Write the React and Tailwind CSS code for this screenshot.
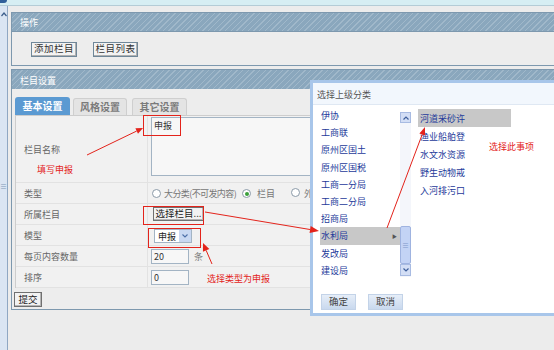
import React from 'react';

const leftItems = ['伊协', '工商联', '原州区国土', '原州区国税', '工商一分局', '工商二分局', '招商局', '水利局', '发改局', '建设局'];
const rightItems = ['河道采砂许', '渔业船舶登', '水文水资源', '野生动物戒', '入河排污口'];

const stripe = 'bg-[repeating-linear-gradient(135deg,#8aa7bd_0px,#8aa7bd_3px,#a0b8ca_3px,#a0b8ca_4px)]';

// red arrow with a filled head, points computed from the two ends
function Arrow({ x1, y1, x2, y2, len = 8, half = 3 }) {
  const dx = x2 - x1;
  const dy = y2 - y1;
  const d = Math.hypot(dx, dy);
  const ux = dx / d;
  const uy = dy / d;
  const bx = x2 - ux * len;
  const by = y2 - uy * len;
  const pts = `${x2},${y2} ${bx - uy * half},${by + ux * half} ${bx + uy * half},${by - ux * half}`;
  return (
    <g>
      <line x1={x1} y1={y1} x2={bx} y2={by} stroke="#e3231b" strokeWidth="1" />
      <polygon points={pts} fill="#e3231b" />
    </g>
  );
}

function Radio({ checked }) {
  return (
    <span className="inline-flex shrink-0 items-center justify-center w-[9px] h-[9px] rounded-full border border-[#8b9aa8] bg-white">
      {checked && <span className="w-[4px] h-[4px] rounded-full bg-[#3aa03a]" />}
    </span>
  );
}

function Row({ label, h = 'h-[21px]', children }) {
  return (
    <div className={`flex ${h} border-b border-[#e2e2e2]`}>
      <div className="w-[132px] flex items-center pl-[8px] text-[#666] border-r border-[#e2e2e2]">{label}</div>
      <div className="flex-1 flex items-center pl-[3px]">{children}</div>
    </div>
  );
}

export default function App() {
  return (
    <div className="relative w-[554px] h-[350px] overflow-hidden bg-[#ececec] font-['Noto_Sans_CJK_SC',sans-serif] text-[9px] leading-none text-[#333]">
      {/* top band */}
      <div className="flex h-[6px] bg-[#d6eef3] border-b border-[#b4ccd6]">
        <div className="w-[7px] h-[3px] bg-[#2f5f9a] rounded-br-[3px]" />
      </div>

      <div className="flex h-[344px]">
        {/* page scroll strip */}
        <div className="w-[8px] bg-[#dae5f3] border-r border-[#8fa7c3] flex flex-col items-center">
          <svg width="6" height="5" viewBox="0 0 6 5" className="mt-[6px]">
            <path d="M0.5 4 L3 1 L5.5 4" fill="none" stroke="#3b5d8a" strokeWidth="1.2" />
          </svg>
          <div className="mt-[166px] text-[7px] text-[#7f97b8]">≡</div>
        </div>

        <div className="flex-1 pl-[3px] pt-[6px] flex flex-col">
          {/* 操作 panel */}
          <div className="w-[600px] border border-[#7d98ae] bg-[#ededed]">
            <div className={`h-[19px] ${stripe} flex items-center pl-[8px] pt-[1px] text-white border-b border-[#7d98ae]`}>操作</div>
            <div className="h-[33px] flex items-center gap-[16px] pl-[19px] pt-[1px]">
              <button className="h-[15px] w-[46px] border border-[#6f8799] bg-[#f3f3f3] text-[9.5px] tracking-[0.5px] text-[#333] shadow-[inset_-1px_-1px_0_#b0b0b0]">添加栏目</button>
              <button className="h-[15px] w-[45px] border border-[#6f8799] bg-[#f3f3f3] text-[9.5px] tracking-[0.5px] text-[#333] shadow-[inset_-1px_-1px_0_#b0b0b0]">栏目列表</button>
            </div>
          </div>

          {/* 栏目设置 panel */}
          <div className="mt-[3px] w-[600px] border border-[#7d98ae] bg-[#ededed]">
            <div className={`h-[19px] ${stripe} flex items-center pl-[8px] pt-[1px] text-white`}>栏目设置</div>
            <div className="pt-[8px] pb-[2px]">
              <div className="flex items-end gap-[3px] pl-[3px] h-[18px]">
                <div className="w-[55px] h-[18px] rounded-t-[3px] bg-[#5b9ad2] text-white font-bold text-[10px] flex items-center justify-center">基本设置</div>
                <div className="w-[54px] h-[17px] rounded-t-[3px] bg-[#e4e4e4] border border-b-0 border-[#cfcfcf] text-[#7a7a7a] font-bold text-[10px] flex items-center justify-center">风格设置</div>
                <div className="ml-[2px] w-[55px] h-[17px] rounded-t-[3px] bg-[#e4e4e4] border border-b-0 border-[#cfcfcf] text-[#7a7a7a] font-bold text-[10px] flex items-center justify-center">其它设置</div>
              </div>
              <div className="ml-[3px] border-l border-t border-[#cdcdcd] bg-[#f1f1f1]">
                <Row label="栏目名称" h="h-[67px]">
                  <div className="self-start mt-[1px] w-[200px] h-[59px] bg-[#f7f7f7] border border-[#a3b4c4] px-[2px] pt-[3px]">申报</div>
                </Row>
                <Row label="类型">
                  <div className="flex items-center pl-[1px] text-[#777] whitespace-nowrap">
                    <Radio />
                    <span className="ml-[3px] tracking-[-0.6px]">大分类(不可发内容)</span>
                    <span className="ml-[6px]"><Radio checked /></span>
                    <span className="ml-[6px]">栏目</span>
                    <span className="ml-[16px]"><Radio /></span>
                    <span className="ml-[4px]">外部链接</span>
                  </div>
                </Row>
                <Row label="所属栏目">
                  <button className="ml-[2px] h-[14px] w-[51px] border border-[#707070] bg-[#f2f2f2] text-[9.5px] text-[#222] whitespace-nowrap overflow-hidden shadow-[inset_-1px_-1px_0_#b5b5b5]">选择栏目...</button>
                </Row>
                <Row label="模型">
                  <div className="ml-[3px] mt-[2px] h-[14px] w-[38px] border border-[#a3b4c4] bg-white flex items-center">
                    <span className="pl-[3px] flex-1 text-[#222]">申报</span>
                    <span className="w-[12px] h-full bg-[#c9d8f2] flex items-center justify-center">
                      <svg width="6" height="4" viewBox="0 0 6 4">
                        <path d="M0.5 0.5 L3 3 L5.5 0.5" fill="none" stroke="#4d6fa8" strokeWidth="1.1" />
                      </svg>
                    </span>
                  </div>
                </Row>
                <Row label="每页内容数量">
                  <div className="w-[38px] h-[15px] border border-[#a3b4c4] bg-[#f7f7f7] flex items-center pl-[2px]">20</div>
                  <span className="ml-[5px] text-[#777]">条</span>
                </Row>
                <Row label="排序">
                  <div className="w-[38px] h-[15px] border border-[#a3b4c4] bg-[#f7f7f7] flex items-center pl-[2px]">0</div>
                </Row>
              </div>
              <button className="mt-[4px] ml-[2px] h-[15px] w-[28px] border border-[#707070] bg-[#f2f2f2] text-[9.5px] text-[#222] shadow-[inset_-1px_-1px_0_#b5b5b5]">提交</button>
            </div>
          </div>
        </div>
      </div>

      {/* dialog */}
      <div className="absolute left-[310px] top-[80px] w-[260px] h-[236px] border-[3px] border-[#a8c6ea] bg-white">
        <div className="h-[22px] bg-[#f2f7fd] border-b border-[#dfe8f3] flex items-center pl-[4px] pt-[1px] text-[#555]">选择上级分类</div>
        <div className="flex pt-[1px]">
          <div className="ml-[7px] pt-[1px] w-[80px] flex flex-col">
            {leftItems.map((it) => (
              <div key={it} className={`h-[17.2px] flex items-center pl-[1px] text-[#1d3a9a] ${it === '水利局' ? 'bg-[#c8c8c8]' : ''}`}>
                <span className="flex-1">{it}</span>
                {it === '水利局' && <span className="pr-[3px] text-[5px] text-[#555]">▶</span>}
              </div>
            ))}
          </div>
          <div className="mt-[6px] w-[11px] h-[165px] flex flex-col bg-[#f4f6fb]">
            <div className="h-[11px] bg-[#d3def5] border border-[#a8bbe2] flex items-center justify-center">
              <svg width="6" height="4" viewBox="0 0 6 4">
                <path d="M0.5 3.5 L3 1 L5.5 3.5" fill="none" stroke="#3e5f9c" strokeWidth="1.2" />
              </svg>
            </div>
            <div className="h-[103px]" />
            <div className="h-[38px] bg-[#c3d3f5] border border-[#9fb3e0] rounded-[2px] flex items-center justify-center text-[7px] text-[#7e96c8]">≡</div>
            <div className="h-[12px] bg-[#d3def5] border border-[#a8bbe2] flex items-center justify-center">
              <svg width="6" height="4" viewBox="0 0 6 4">
                <path d="M0.5 0.5 L3 3 L5.5 0.5" fill="none" stroke="#3e5f9c" strokeWidth="1.2" />
              </svg>
            </div>
          </div>
          <div className="ml-[7px] mt-[3px] w-[93px] flex flex-col">
            {rightItems.map((it, i) => (
              <div key={it} className={`h-[18px] flex items-center pl-[2px] text-[#1d3a9a] ${i === 0 ? 'bg-[#c8c8c8]' : ''}`}>{it}</div>
            ))}
          </div>
        </div>
        <div className="absolute left-[8px] top-[211px] flex gap-[12px]">
          <button className="w-[35px] h-[16px] bg-[linear-gradient(#e6eef8,#c9d9ee)] border border-[#c3d3e8] text-[#444] text-[9.5px]">确定</button>
          <button className="w-[35px] h-[16px] bg-[linear-gradient(#e6eef8,#c9d9ee)] border border-[#c3d3e8] text-[#444] text-[9.5px]">取消</button>
        </div>
      </div>

      {/* annotations */}
      <svg className="absolute left-0 top-0 pointer-events-none" width="554" height="350">
        <rect x="143.5" y="115.5" width="37" height="20" fill="none" stroke="#e3231b" />
        <rect x="143.5" y="206.5" width="60" height="18" fill="none" stroke="#e3231b" />
        <rect x="148.5" y="228.5" width="52" height="19" fill="none" stroke="#e3231b" />
        <Arrow x1={87} y1={155} x2={143} y2={128} len={7} half={3} />
        <Arrow x1={205} y1={212} x2={319} y2={231} len={9} half={3.5} />
        <Arrow x1={212} y1={264} x2={203} y2={243} len={8} half={3.5} />
        <Arrow x1={387} y1={228} x2={425} y2={127} len={8} half={3} />
      </svg>
      <div className="absolute left-[37px] top-[165px] text-[9px] text-[#e3231b]">填写申报</div>
      <div className="absolute left-[207px] top-[274px] text-[9px] text-[#e3231b]">选择类型为申报</div>
      <div className="absolute left-[489px] top-[142px] text-[9px] text-[#e3231b]">选择此事项</div>
    </div>
  );
}
